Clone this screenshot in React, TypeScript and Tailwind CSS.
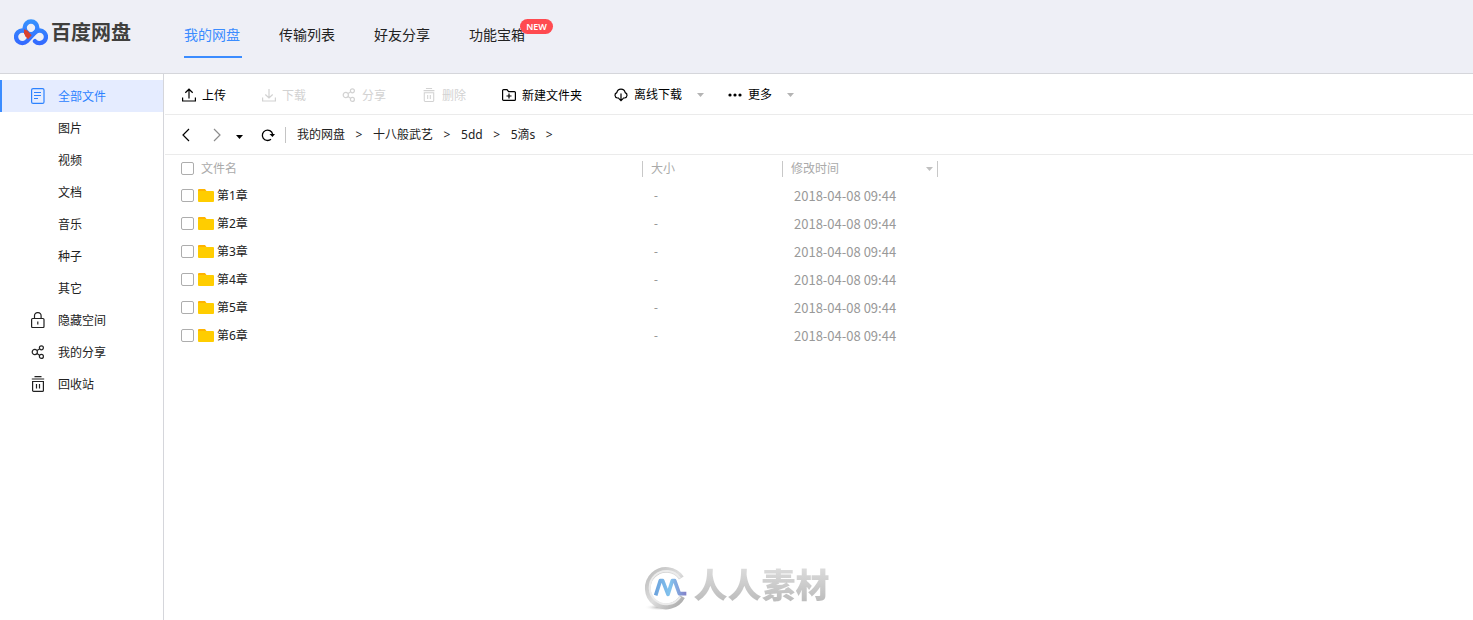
import { ReactNode, useState } from 'react';

const NAV_TABS = ['我的网盘', '传输列表', '好友分享', '功能宝箱'];

const CATEGORIES = [
  { label: '全部文件', icon: <DocIcon /> },
  { label: '图片' },
  { label: '视频' },
  { label: '文档' },
  { label: '音乐' },
  { label: '种子' },
  { label: '其它' },
  { label: '隐藏空间', icon: <LockIcon /> },
  { label: '我的分享', icon: <ShareIcon /> },
  { label: '回收站', icon: <TrashIcon className="w-[14px] h-4" /> },
];

const CRUMBS = ['我的网盘', '十八般武艺', '5dd', '5滴s'];

const FILES = [
  { name: '第1章', size: '-', modified: '2018-04-08 09:44' },
  { name: '第2章', size: '-', modified: '2018-04-08 09:44' },
  { name: '第3章', size: '-', modified: '2018-04-08 09:44' },
  { name: '第4章', size: '-', modified: '2018-04-08 09:44' },
  { name: '第5章', size: '-', modified: '2018-04-08 09:44' },
  { name: '第6章', size: '-', modified: '2018-04-08 09:44' },
];

function Icon({ children }: { children: ReactNode }) {
  return (
    <svg viewBox="0 0 14 14" className="w-[14px] h-[14px] shrink-0" fill="none" stroke="currentColor" strokeWidth="1.2" aria-hidden="true">
      {children}
    </svg>
  );
}

function DocIcon() {
  return (
    <svg viewBox="0 0 14 16" className="w-[14px] h-4 shrink-0" fill="none" stroke="currentColor" aria-hidden="true">
      <rect x="0.6" y="0.6" width="12.4" height="14.8" rx="1.5" strokeWidth="1.2" />
      <path d="M3 4.5h7M3 7.5h7M3 10.5h4" />
    </svg>
  );
}

function LockIcon() {
  return (
    <svg viewBox="0 0 14 16" className="w-[14px] h-4 shrink-0" fill="none" stroke="currentColor" strokeWidth="1.2" aria-hidden="true">
      <rect x="0.6" y="6.5" width="12.4" height="9" rx="1" />
      <path d="M3.5 6.5V4a3 3 0 0 1 3-3.3h.6a3 3 0 0 1 3 3.3v2.5M6.8 9.5v3" />
    </svg>
  );
}

function ShareIcon() {
  return (
    <Icon>
      <circle cx="3.8" cy="7" r="2.6" />
      <circle cx="10.4" cy="2.8" r="2" />
      <circle cx="10.4" cy="11.4" r="2" />
      <path d="M6 5.500l2.500-1.500M6 8.600l2.500 1.600" />
    </Icon>
  );
}

function TrashIcon({ className }: { className: string }) {
  return (
    <svg viewBox="0 0 14 16" className={`shrink-0 ${className}`} fill="none" stroke="currentColor" strokeWidth="1.2" aria-hidden="true">
      <path d="M3.5 0.600h7M0.800 3h12.400M1.600 5.500h10.800v8.900a1 1 0 0 1-1 1H2.600a1 1 0 0 1-1-1zM5.500 8v4.500M8.500 8v4.500" />
    </svg>
  );
}

function UploadIcon() {
  return (
    <Icon>
      <path d="M7 10.5V1.2M3.3 4.8L7 1.2l3.7 3.6M0.600 9.500v3.500h12.800V9.500" />
    </Icon>
  );
}

function DownloadIcon() {
  return (
    <Icon>
      <path d="M7 1v9M3.3 6.500L7 10l3.700-3.500M0.600 9.500v3.500h12.800V9.500" />
    </Icon>
  );
}

function NewFolderIcon() {
  return (
    <Icon>
      <path d="M0.600 2.600a1 1 0 0 1 1-1h3.400l1.600 2h5.800a1 1 0 0 1 1 1v6.800a1 1 0 0 1-1 1H1.600a1 1 0 0 1-1-1zM7 5.500v5M4.500 8h5" />
    </Icon>
  );
}

function CloudIcon() {
  return (
    <Icon>
      <path d="M5 10H3.400a2.800 2.800 0 0 1-.6-5.400 4.300 4.300 0 0 1 8.400 0A2.800 2.800 0 0 1 10.600 10H9M7 5.500v7M4.700 10.400L7 12.700l2.300-2.300" />
    </Icon>
  );
}

function DotsIcon() {
  return (
    <Icon>
      <g fill="currentColor" stroke="none">
        <circle cx="2" cy="7" r="1.600" />
        <circle cx="7" cy="7" r="1.600" />
        <circle cx="12" cy="7" r="1.600" />
      </g>
    </Icon>
  );
}

function Caret({ className = '' }: { className?: string }) {
  return (
    <svg viewBox="0 0 7 4" className={`w-[7px] h-1 shrink-0 ${className}`} fill="currentColor" aria-hidden="true">
      <path d="M0 0h7L3.500 4z" />
    </svg>
  );
}

function FolderIcon() {
  return (
    <svg viewBox="0 0 16 13" className="w-4 h-[13px] shrink-0" aria-hidden="true">
      <path d="M0 1a1 1 0 0 1 1-1h6l1.500 2H15v4H0z" fill="#ffb300" />
      <path d="M0 2h15a1 1 0 0 1 1 1v9a1 1 0 0 1-1 1H1a1 1 0 0 1-1-1z" fill="#ffcd00" />
    </svg>
  );
}

function BrandMark() {
  return (
    <svg viewBox="0 0 102 80" className="w-[34px] h-[27px] shrink-0" fill="none" strokeWidth="13" aria-hidden="true">
      <defs>
        <linearGradient id="brand" x1="0" y1="0" x2="0" y2="80" gradientUnits="userSpaceOnUse">
          <stop offset="0" stopColor="#3694ff" />
          <stop offset="1" stopColor="#3366ff" />
        </linearGradient>
      </defs>
      <circle cx="51" cy="26" r="19" stroke="url(#brand)" />
      <path
        d="M63 66A19 19 0 1 0 63.500 39.500L38.500 66.500A19 19 0 1 1 38.500 39.500"
        stroke="url(#brand)"
        strokeLinecap="round"
      />
      <path d="M30 30L40 34L53 48L42 60L34 51L30 42z" fill="#d8402f" />
    </svg>
  );
}

function Watermark() {
  return (
    <div className="fixed bottom-[9px] left-1/2 -translate-x-1/2 flex items-center gap-[7px] pointer-events-none">
      <svg viewBox="0 0 129 135" className="w-[43px] h-[45px]" fill="none" aria-hidden="true">
        <defs>
          <linearGradient id="ring" x1="0" y1="0" x2="1" y2="1">
            <stop offset="0" stopColor="#bcbcbc" />
            <stop offset="0.5" stopColor="#dedede" />
            <stop offset="1" stopColor="#a8a8a8" />
          </linearGradient>
          <linearGradient id="wave" x1="30" y1="0" x2="127" y2="0" gradientUnits="userSpaceOnUse">
            <stop offset="0" stopColor="#6aa0dc" />
            <stop offset="0.5" stopColor="#83c4ee" />
            <stop offset="1" stopColor="#8380c8" />
          </linearGradient>
          <radialGradient id="shade">
            <stop offset="0" stopColor="#a0a0a0" />
            <stop offset="1" stopColor="#ffffff" stopOpacity="0" />
          </radialGradient>
        </defs>
        <ellipse cx="48" cy="124" rx="48" ry="10" fill="url(#shade)" />
        <path d="M112 36A55 55 0 1 0 115 92" stroke="url(#ring)" strokeWidth="17" />
        <path d="M108 36A50 50 0 1 0 109 92" stroke="#ececec" strokeWidth="6" />
        <path d="M35 88L49 44L56 44L72 85L85 44L92 44L106 83L127 83" stroke="url(#wave)" strokeWidth="11" strokeLinejoin="round" />
      </svg>
      <span className="pb-1.5 font-black text-[34px] leading-10 text-transparent bg-clip-text bg-gradient-to-b from-[#dedede] to-[#b4b4b4]">
        人人素材
      </span>
    </div>
  );
}

function ToolButton({ icon, label, disabled, menu, className }: {
  icon: ReactNode;
  label: string;
  disabled?: boolean;
  menu?: boolean;
  className: string;
}) {
  return (
    <button
      type="button"
      disabled={disabled}
      className={`flex items-center gap-1.5 shrink-0 whitespace-nowrap ${disabled ? 'text-[#d2d2d2]' : 'text-black'} ${className}`}
    >
      {icon}
      <span className={menu ? '' : 'pt-px'}>{label}</span>
      {menu && <Caret className="ml-[9px] text-[#b4b4b4]" />}
    </button>
  );
}

function CheckBox({ label, checked, onChange }: { label: string; checked: boolean; onChange: () => void }) {
  return (
    <input
      type="checkbox"
      aria-label={label}
      checked={checked}
      onChange={onChange}
      className="appearance-none w-[13px] h-[13px] shrink-0 rounded-[2px] border border-[#adadad] bg-white checked:bg-[#3b8cff]"
    />
  );
}

export default function App() {
  const [tab, setTab] = useState('我的网盘');
  const [category, setCategory] = useState('全部文件');
  const [selected, setSelected] = useState<string[]>([]);

  const allSelected = selected.length === FILES.length;

  const toggleAll = () => setSelected(allSelected ? [] : FILES.map((f) => f.name));

  const toggle = (name: string) => {
    setSelected((prev) => (prev.includes(name) ? prev.filter((n) => n !== name) : [...prev, name]));
  };

  return (
    <div className="min-h-screen flex flex-col bg-white text-xs text-[#222] font-['Noto_Sans','Noto_Sans_CJK_SC',sans-serif]">
      <header className="flex items-stretch h-[74px] bg-[#eeeff6] border-b border-[#d5d6db]">
        <div className="flex items-center gap-[3px] w-[184px] pl-[14px] pb-2 shrink-0">
          <BrandMark />
          <span className="text-xl leading-6 font-bold text-[#403f3d]">百度网盘</span>
        </div>
        <nav className="flex items-start gap-[37px] pt-5">
          {NAV_TABS.map((name) => (
            <button
              key={name}
              type="button"
              onClick={() => setTab(name)}
              className={`relative w-[58px] h-[38px] pb-1 flex items-start text-sm leading-[30px] whitespace-nowrap border-b-2 ${
                tab === name ? 'text-[#3b8cff] border-[#3b8cff]' : 'border-transparent'
              }`}
            >
              {name}
              {name === '功能宝箱' && (
                <span className="absolute -top-px left-[51px] w-[33px] h-[15px] rounded-full bg-[#ff4a50] text-white text-[9px] leading-[15px] font-semibold text-center">
                  NEW
                </span>
              )}
            </button>
          ))}
        </nav>
      </header>

      <div className="flex flex-1">
        <aside className="w-[164px] shrink-0 border-r border-[#d5d6db] pt-1.5">
          {CATEGORIES.map(({ label, icon }) => (
            <button
              key={label}
              type="button"
              onClick={() => setCategory(label)}
              className={`flex items-center w-full h-8 pl-[29px] border-l-2 ${
                category === label ? 'bg-[#e5ecff] border-[#3b8cff] text-[#2c82ff]' : 'border-transparent'
              }`}
            >
              <span className="w-[27px] flex">{icon}</span>
              <span className="pt-0.5">{label}</span>
            </button>
          ))}
        </aside>

        <main className="flex-1 min-w-0 pl-px">
          <div className="flex items-center h-[41px] pl-[17px] pt-0.5 border-b border-[#ebebeb]">
            <ToolButton icon={<UploadIcon />} label="上传" className="w-20" />
            <ToolButton icon={<DownloadIcon />} label="下载" disabled className="w-20" />
            <ToolButton icon={<ShareIcon />} label="分享" disabled className="w-20" />
            <ToolButton icon={<TrashIcon className="w-[14px] h-[14px]" />} label="删除" disabled className="w-20" />
            <ToolButton icon={<NewFolderIcon />} label="新建文件夹" className="w-28" />
            <ToolButton icon={<CloudIcon />} label="离线下载" menu className="w-[114px]" />
            <ToolButton icon={<DotsIcon />} label="更多" menu className="w-[114px]" />
          </div>

          <div className="flex items-center h-10 pl-[15px] border-b border-[#ebebeb]">
            <button type="button" aria-label="后退" className="w-[30px] text-black">
              <Icon><path d="M9 1L3 7l6 6" /></Icon>
            </button>
            <button type="button" aria-label="前进" className="w-[26px] text-[#8c8c8c]">
              <Icon><path d="M4 1l6 6-6 6" /></Icon>
            </button>
            <button type="button" aria-label="历史记录" className="w-[25px] pt-1 text-black">
              <Caret />
            </button>
            <button type="button" aria-label="刷新" className="w-6 text-black">
              <Icon>
                <path d="M10 11.200A5.200 5.200 0 1 1 11.600 6" strokeWidth="1.300" />
                <path d="M8.500 6h5.500l-2.500 3z" fill="currentColor" stroke="none" />
              </Icon>
            </button>
            <nav className="flex items-center h-4 pl-[11px] border-l border-[#c4c4c4]">
              {CRUMBS.map((crumb) => (
                <span key={crumb} className="flex items-center">
                  <a href="#" className="whitespace-nowrap">{crumb}</a>
                  <span className="w-7 text-center">&gt;</span>
                </span>
              ))}
            </nav>
          </div>

          <table className="w-full table-fixed text-left">
            <colgroup>
              <col className="w-[477px]" />
              <col className="w-[140px]" />
              <col className="w-[156px]" />
              <col />
            </colgroup>
            <thead className="text-[#aaa]">
              <tr className="h-[27px]">
                <th className="p-0 pl-4 font-normal">
                  <div className="flex items-center gap-[7px]">
                    <CheckBox label="全选" checked={allSelected} onChange={toggleAll} />
                    文件名
                  </div>
                </th>
                <th className="p-0 font-normal">
                  <div className="h-4 pl-2 leading-4 border-l border-[#c8c8c8]">大小</div>
                </th>
                <th className="p-0 font-normal">
                  <div className="flex items-center justify-between h-4 pl-2 pr-1 border-x border-[#c8c8c8]">
                    修改时间
                    <Caret className="text-[#c0c0c0]" />
                  </div>
                </th>
                <th className="p-0" />
              </tr>
            </thead>
            <tbody>
              {FILES.map((file) => (
                <tr key={file.name} className="h-7">
                  <td className="p-0 pl-4">
                    <div className="flex items-center pb-px">
                      <CheckBox label={file.name} checked={selected.includes(file.name)} onChange={() => toggle(file.name)} />
                      <span className="ml-1 mr-[3px]"><FolderIcon /></span>
                      <span className="pt-px">{file.name}</span>
                    </div>
                  </td>
                  <td className="p-0 pl-3 text-[#999]">{file.size}</td>
                  <td className="p-0 pl-3 text-[13px] leading-5 text-[#999] whitespace-nowrap font-['Noto_Sans_CJK_SC',sans-serif]">
                    {file.modified}
                  </td>
                  <td className="p-0" />
                </tr>
              ))}
            </tbody>
          </table>
        </main>
      </div>

      <Watermark />
    </div>
  );
}
